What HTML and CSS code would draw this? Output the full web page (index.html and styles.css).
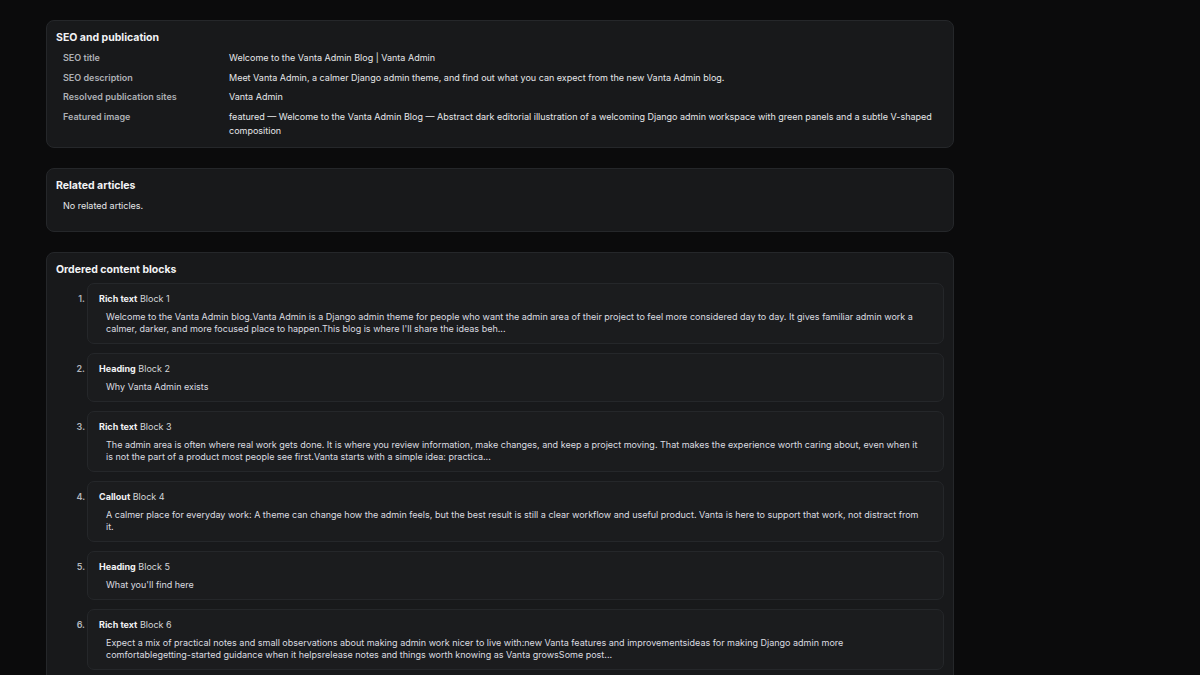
FILE: index.html
```html
<!DOCTYPE html>
<html lang="en">
<head>
<meta charset="utf-8">
<title>Article detail</title>
<link rel="stylesheet" href="styles.css">
</head>
<body>
<main class="page">
  <section class="card">
    <h2 class="card-title">SEO and publication</h2>
    <table class="meta">
      <tbody>
        <tr><th>SEO title</th><td>Welcome to the Vanta Admin Blog | Vanta Admin</td></tr>
        <tr><th>SEO description</th><td>Meet Vanta Admin, a calmer Django admin theme, and find out what you can expect from the new Vanta Admin blog.</td></tr>
        <tr><th>Resolved publication sites</th><td>Vanta Admin</td></tr>
        <tr><th>Featured image</th><td>featured — Welcome to the Vanta Admin Blog — Abstract dark editorial illustration of a welcoming Django admin workspace with green panels and a subtle V-shaped composition</td></tr>
      </tbody>
    </table>
  </section>

  <section class="card card-related">
    <h2 class="card-title">Related articles</h2>
    <p class="empty">No related articles.</p>
  </section>

  <section class="card card-blocks">
    <h2 class="card-title">Ordered content blocks</h2>
    <ol class="blocks">
      <li class="block-item">
        <span class="num">1.</span>
        <div class="block">
          <div class="block-head"><strong>Rich text</strong> Block 1</div>
          <div class="block-body">Welcome to the Vanta Admin blog.Vanta Admin is a Django admin theme for people who want the admin area of their project to feel more considered day to day. It gives familiar admin work a calmer, darker, and more focused place to happen.This blog is where I'll share the ideas beh...</div>
        </div>
      </li>
      <li class="block-item">
        <span class="num">2.</span>
        <div class="block">
          <div class="block-head"><strong>Heading</strong> Block 2</div>
          <div class="block-body">Why Vanta Admin exists</div>
        </div>
      </li>
      <li class="block-item">
        <span class="num">3.</span>
        <div class="block">
          <div class="block-head"><strong>Rich text</strong> Block 3</div>
          <div class="block-body">The admin area is often where real work gets done. It is where you review information, make changes, and keep a project moving. That makes the experience worth caring about, even when it is not the part of a product most people see first.Vanta starts with a simple idea: practica...</div>
        </div>
      </li>
      <li class="block-item">
        <span class="num">4.</span>
        <div class="block">
          <div class="block-head"><strong>Callout</strong> Block 4</div>
          <div class="block-body">A calmer place for everyday work: A theme can change how the admin feels, but the best result is still a clear workflow and useful product. Vanta is here to support that work, not distract from it.</div>
        </div>
      </li>
      <li class="block-item">
        <span class="num">5.</span>
        <div class="block">
          <div class="block-head"><strong>Heading</strong> Block 5</div>
          <div class="block-body">What you'll find here</div>
        </div>
      </li>
      <li class="block-item">
        <span class="num">6.</span>
        <div class="block">
          <div class="block-head"><strong>Rich text</strong> Block 6</div>
          <div class="block-body">Expect a mix of practical notes and small observations about making admin work nicer to live with:new Vanta features and improvementsideas for making Django admin more comfortablegetting-started guidance when it helpsrelease notes and things worth knowing as Vanta growsSome post...</div>
        </div>
      </li>
    </ol>
  </section>
</main>
</body>
</html>
```

FILE: styles.css
```css
html, body {
  margin: 0;
  padding: 0;
  background: #0b0b0c;
}

body {
  font-family: Inter, "Noto Sans", "DejaVu Sans", sans-serif;
  font-size: 9px;
  color: #e4e5e7;
  overflow: hidden;
  height: 675px;
}

.page {
  width: 908px;
  padding: 20px 0 0 46px;
}

.card {
  background: #18191b;
  border: 1px solid #25272a;
  border-radius: 8px;
  padding: 9px 9px 7px;
  margin-bottom: 20px;
}

.card-title {
  margin: 0;
  padding-top: 1px;
  font-size: 10.5px;
  line-height: 14px;
  font-weight: 700;
  color: #f2f3f5;
}

.meta {
  border-collapse: collapse;
  margin-top: 3px;
  width: 100%;
}

.meta th {
  text-align: left;
  vertical-align: top;
  font-weight: 600;
  color: #adb0b5;
  width: 159px;
  padding: 3px 7px 2.5px;
  line-height: 14px;
}

.meta td {
  vertical-align: top;
  color: #e6e7e9;
  padding: 3px 7px 2.5px 0;
  line-height: 14px;
}

.empty {
  margin: 3px 0 8px;
  padding: 3px 7px;
  line-height: 14px;
  color: #e6e7e9;
}

.card-blocks {
  padding-bottom: 12px;
}

.blocks {
  list-style: none;
  margin: 6px 0 0;
  padding: 0;
  display: flex;
  flex-direction: column;
  gap: 9px;
}

.block-item {
  display: flex;
  align-items: flex-start;
}

.num {
  flex: 0 0 31px;
  box-sizing: border-box;
  text-align: right;
  padding-right: 2px;
  padding-top: 9px;
  line-height: 13px;
  color: #b3b6bb;
  font-weight: 600;
}

.block {
  flex: 1;
  background: #1b1c1e;
  border: 1px solid #25272a;
  border-radius: 7px;
  padding: 8px 11px 8px;
}

.block-head {
  line-height: 13px;
  color: #d4d6d9;
}

.block-head strong {
  font-weight: 700;
  color: #f2f3f5;
}

.block-body {
  margin-top: 6px;
  padding: 0 7px;
  line-height: 12px;
  color: #dcdde0;
}
```
